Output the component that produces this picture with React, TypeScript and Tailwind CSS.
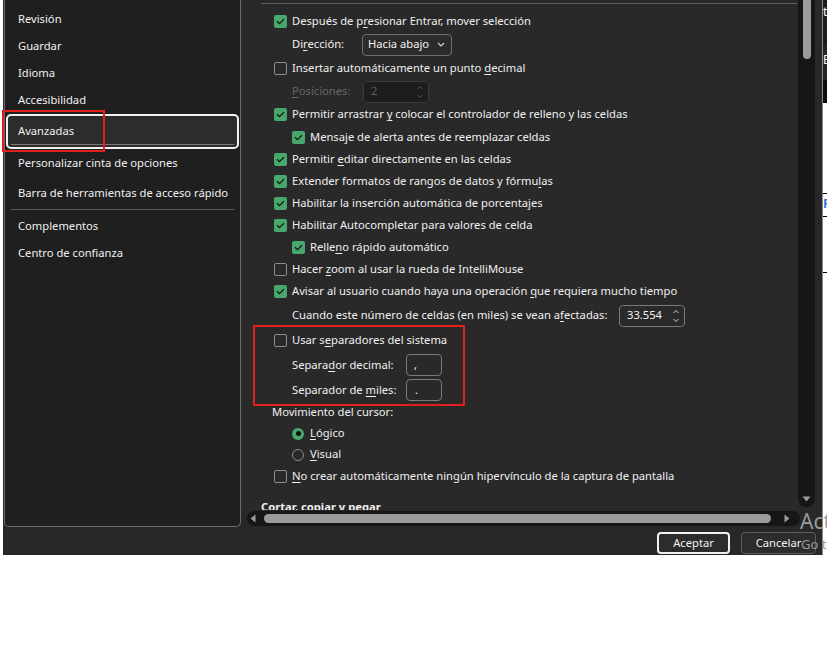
import React from "react";

const U = ({ children }: { children: React.ReactNode }) => (
  <span className="underline underline-offset-[2px] decoration-1">{children}</span>
);

function Box({ on }: { on?: boolean }) {
  return on ? (
    <span className="w-[13px] h-[13px] rounded-[2px] bg-[#46a86c] flex items-center justify-center shrink-0">
      <svg width="9" height="7" viewBox="0 0 9 7">
        <path d="M1 3.3 L3.4 5.6 L8 1.2" fill="none" stroke="#141414" strokeWidth="1.2" />
      </svg>
    </span>
  ) : (
    <span className="w-[13px] h-[13px] rounded-[2px] border border-[#8c8c8c] shrink-0" />
  );
}

function Check({ on, sub, h, children }: { on?: boolean; sub?: boolean; h: string; children: React.ReactNode }) {
  return (
    <div className={`flex items-center gap-[5px] ${h} ${sub ? "pl-[51px]" : "pl-[33px]"}`}>
      <Box on={on} />
      <span className="whitespace-nowrap">{children}</span>
    </div>
  );
}

function Spin({ value, disabled }: { value: string; disabled?: boolean }) {
  return (
    <div
      className={`h-[22px] w-[66px] rounded-[4px] border flex items-center justify-between pl-[7px] pr-[4px] ${
        disabled ? "bg-[#1d1d1d] border-[#3a3a3a] text-[#5e5e5e]" : "bg-[#2a2a2a] border-[#7a7a7a] text-[#f2f2f2]"
      }`}
    >
      <span>{value}</span>
      <svg width="8" height="16" viewBox="0 0 8 16">
        <path d="M1.5 5 L4 2.5 L6.5 5 M1.5 11 L4 13.5 L6.5 11" fill="none" stroke={disabled ? "#555" : "#cfcfcf"} strokeWidth="1" />
      </svg>
    </div>
  );
}

function Radio({ on, children }: { on?: boolean; children: React.ReactNode }) {
  return (
    <div className="flex items-center gap-[6px] pl-[51px] h-[21px]">
      {on ? (
        <span className="w-[12px] h-[12px] rounded-full bg-[#46a86c] flex items-center justify-center shrink-0">
          <span className="w-[5px] h-[5px] rounded-full bg-[#111]" />
        </span>
      ) : (
        <span className="w-[12px] h-[12px] rounded-full border border-[#8c8c8c] shrink-0" />
      )}
      <span>{children}</span>
    </div>
  );
}

const nav = ["Revisión", "Guardar", "Idioma", "Accesibilidad"];

export default function App() {
  return (
    <div className="relative w-[827px] h-[670px] bg-white overflow-hidden flex items-start font-['Noto_Sans',sans-serif] text-[11.2px] text-[#f0f0f0]">
      {/* Dialog */}
      <div className="ml-[3px] w-[819px] h-[555px] bg-[#282828] flex flex-col">
        <div className="h-[527px] flex">
          {/* Left nav */}
          <aside className="ml-px w-[237px] h-[527px] bg-[#1f1f1f] border border-t-0 border-[#6b6b6b] rounded-b-[5px] flex flex-col pt-[6px] whitespace-nowrap">
            {nav.map((n) => (
              <div key={n} className="h-[27px] flex items-center pl-[13px]">
                {n}
              </div>
            ))}
            <div className="relative ml-px w-[233px] h-[35px] border-2 border-[#f2f2f2] rounded-[5px] bg-[#2c2c2c] flex flex-col">
              <div className="flex-1 flex items-center pl-[10px] pt-[3px]">Avanzadas</div>
              <div className="h-px mx-[3px] mb-[2px] bg-[#7a7a7a]" />
              <div className="absolute -left-[6px] -top-[6px] w-[103px] h-[42px] border-2 border-[#e1201c]" />
            </div>
            <div className="h-[29px] flex items-center pl-[13px]">Personalizar cinta de opciones</div>
            <div className="h-[30px] flex items-center pl-[13px]">Barra de herramientas de acceso rápido</div>
            <div className="h-[4px] flex items-start px-[6px] pt-px">
              <div className="h-px w-full bg-[#5c5c5c]" />
            </div>
            <div className="h-[28px] flex items-center pl-[13px]">Complementos</div>
            <div className="h-[27px] flex items-center pl-[13px]">Centro de confianza</div>
          </aside>

          {/* Content */}
          <div className="w-[581px] h-[527px] flex flex-col">
            <div className="h-[510px] flex">
              <div className="relative w-[557px] h-[510px] overflow-hidden bg-[#292929]">
                <div className="mt-[3px] ml-[20px] w-[536px] h-px bg-[#5c5c5c]" />
                <div className="h-[6px]" />
                <Check on h="h-[23px]">
                  Después de p<U>r</U>esionar Entrar, mover selección
                </Check>
                <div className="h-[23px] flex items-center pl-[51px]">
                  <span className="w-[70px]">
                    Di<U>r</U>ección:
                  </span>
                  <div className="h-[22px] w-[90px] rounded-[4px] border border-[#6e6e6e] bg-[#2b2b2b] flex items-center justify-between pl-[5px] pr-[6px]">
                    <span>Hacia abajo</span>
                    <svg width="8" height="5" viewBox="0 0 8 5">
                      <path d="M1 1 L4 4 L7 1" fill="none" stroke="#d0d0d0" strokeWidth="1.2" />
                    </svg>
                  </div>
                </div>
                <Check h="h-[24px]">
                  Insertar automáticamente un punto <U>d</U>ecimal
                </Check>
                <div className="h-[23px] flex items-center pl-[51px] text-[#666]">
                  <span className="w-[71px]">
                    <U>P</U>osiciones:
                  </span>
                  <Spin value="2" disabled />
                </div>
                <Check on h="h-[23px]">
                  Permitir arrastrar <U>y</U> colocar el controlador de relleno y las celdas
                </Check>
                <Check on sub h="h-[22px]">
                  Mensa<U>j</U>e de alerta antes de reemplazar celdas
                </Check>
                <Check on h="h-[22px]">
                  Permitir <U>e</U>ditar directamente en las celdas
                </Check>
                <Check on h="h-[22px]">
                  Extender formatos de rangos de datos y fórmu<U>l</U>as
                </Check>
                <Check on h="h-[22px]">
                  Habilitar la inserción automática de porcentajes
                </Check>
                <Check on h="h-[22px]">
                  Habilitar Autocompletar para valores de celda
                </Check>
                <Check on sub h="h-[22px]">
                  Relle<U>n</U>o rápido automático
                </Check>
                <Check h="h-[22px]">
                  Hacer <U>z</U>oom al usar la rueda de IntelliMouse
                </Check>
                <Check on h="h-[23px]">
                  Avisar al usuario cuando haya una operación <U>q</U>ue requiera mucho tiempo
                </Check>
                <div className="h-[25px] flex items-center pl-[51px]">
                  <span className="w-[327px] whitespace-nowrap">
                    Cuando este número de celdas (en miles) se vean a<U>f</U>ectadas:
                  </span>
                  <Spin value="33.554" />
                </div>
                <Check h="h-[24px]">
                  Usar s<U>e</U>paradores del sistema
                </Check>
                <div className="h-[26px] flex items-center pl-[51px]">
                  <span className="w-[114px]">
                    Separa<U>d</U>or decimal:
                  </span>
                  <div className="h-[22px] w-[36px] rounded-[4px] border border-[#7a7a7a] pl-[7px] flex items-center">,</div>
                </div>
                <div className="h-[24px] flex items-center pl-[51px]">
                  <span className="w-[114px]">
                    Separador de <U>m</U>iles:
                  </span>
                  <div className="h-[22px] w-[36px] rounded-[4px] border border-[#7a7a7a] pl-[8px] flex items-center">.</div>
                </div>
                <div className="h-[21px] flex items-center pl-[31px]">Movimiento del cursor:</div>
                <Radio on>
                  <U>L</U>ógico
                </Radio>
                <Radio>
                  <U>V</U>isual
                </Radio>
                <Check h="h-[22px]">
                  <U>N</U>o crear automáticamente ningún hipervínculo de la captura de pantalla
                </Check>
                <div className="mt-[10px] h-[20px] flex items-center pl-[20px] font-bold">Cortar, copiar y pegar</div>

                {/* annotation */}
                <div className="absolute left-[12px] top-[325px] w-[212px] h-[81px] border-2 border-[#e1201c]" />
              </div>

              {/* vertical scrollbar */}
              <div className="w-[17px] h-[507px] bg-[#161616] rounded-b-[8px] flex flex-col items-center">
                <div className="ml-px w-[8px] h-[59px] bg-[#9b9b9b] rounded-b-full" />
                <div className="flex-1" />
                <svg width="9" height="6" viewBox="0 0 9 6" className="mb-[5px]">
                  <path d="M0.5 0.5 H8.5 L4.5 5.5 Z" fill="#9b9b9b" />
                </svg>
              </div>
            </div>

            {/* horizontal scrollbar */}
            <div className="h-[17px] flex items-center pl-[6px]">
              <div className="w-[553px] h-[15px] rounded-full bg-[#161616] flex items-center px-[3px]">
                <svg width="6" height="9" viewBox="0 0 6 9">
                  <path d="M5.5 0.5 V8.5 L0.5 4.5 Z" fill="#9b9b9b" />
                </svg>
                <div className="ml-[8px] w-[507px] h-[9px] rounded-full bg-[#9b9b9b]" />
                <div className="flex-1" />
                <svg width="6" height="9" viewBox="0 0 6 9" className="mr-[7px]">
                  <path d="M0.5 0.5 V8.5 L5.5 4.5 Z" fill="#9b9b9b" />
                </svg>
              </div>
            </div>
          </div>
        </div>

        {/* Buttons */}
        <div className="h-[28px] flex justify-end items-start gap-[11px] pr-[6px] pt-[5px]">
          <button className="w-[73px] h-[22px] rounded-[4px] border-2 border-[#f0f0f0] bg-[#2c2c2c] text-[#f2f2f2] flex items-center justify-center">
            Aceptar
          </button>
          <button className="w-[75px] h-[22px] rounded-[4px] border border-[#5e5e5e] bg-[#2c2c2c] text-[#f2f2f2] flex items-center justify-center">
            Cancelar
          </button>
        </div>
      </div>

      {/* window behind */}
      <div className="w-[5px] h-[555px] flex flex-col border-l border-[#8a8a8a] overflow-hidden text-[12px]">
        <div className="h-[46px] bg-[#1c1c1c] text-white pt-[6px] leading-none">tr</div>
        <div className="h-[34px] bg-[#242424] text-white pt-[8px] leading-none">E</div>
        <div className="h-[23px] bg-[#0c0c0c]" />
        <div className="flex-1 bg-white flex flex-col">
          <div className="h-[90px]" />
          <div className="h-px bg-black" />
          <div className="h-[22px] text-[#2b78d4] font-bold leading-none pt-[4px]">F</div>
          <div className="h-px bg-black" />
          <div className="h-[55px]" />
          <div className="h-px bg-black" />
        </div>
      </div>

      {/* watermark */}
      <div className="absolute left-[800px] top-[506px] text-[21px] text-[#9a9a9a] whitespace-nowrap">Activate Windows</div>
      <div className="absolute left-[801px] top-[535px] text-[13px] text-[#9a9a9a] whitespace-nowrap">Go to Settings to activate Windows.</div>
    </div>
  );
}
